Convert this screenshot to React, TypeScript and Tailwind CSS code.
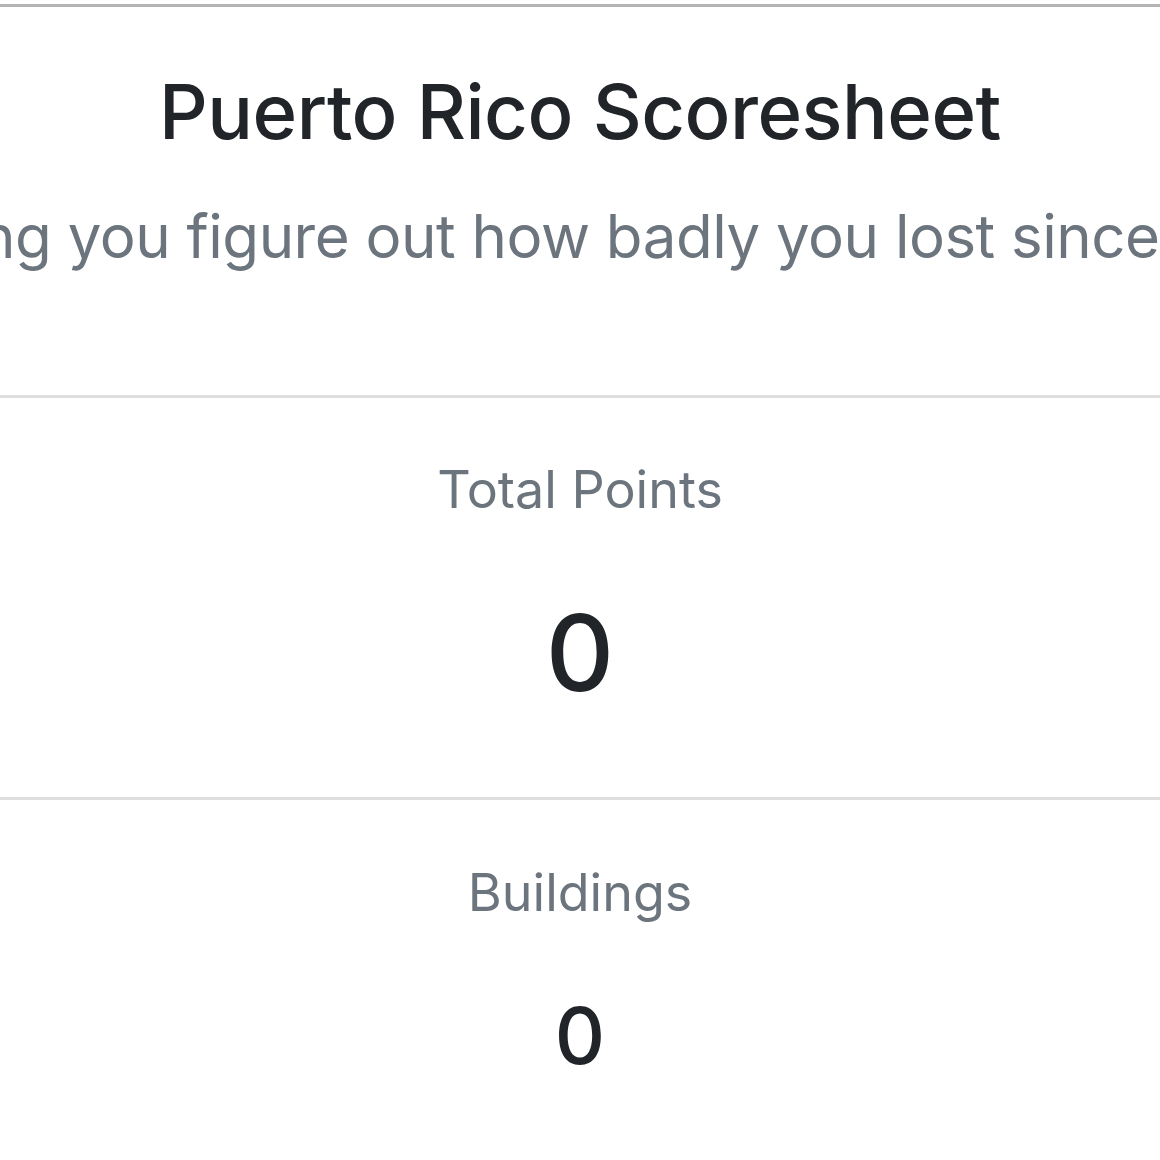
export default function App() {
  return (
    <div
      className="w-[1160px] h-[1160px] overflow-hidden bg-white text-center"
      style={{ fontFamily: 'Inter, "Noto Sans", sans-serif' }}
    >
      {/* Top rule */}
      <div className="mt-[4px] h-[3px] bg-[#b4b4b4]" />

      {/* Header */}
      <header className="flex flex-col items-center pt-[66px] h-[388px]">
        <h1 className="text-[76px] leading-none font-medium text-[#212529] tracking-[-0.5px]">
          Puerto Rico Scoresheet
        </h1>
        <p className="mt-[57px] whitespace-nowrap text-[60px] leading-none text-[#6c757d] tracking-[-0.5px]">
          Helping you figure out how badly you lost since 2002
        </p>
      </header>

      <div className="h-[3px] bg-[#dedede]" />

      {/* Total points */}
      <section className="flex flex-col items-center h-[399px] pt-[66px]">
        <span className="text-[52px] leading-none text-[#6c757d]">Total Points</span>
        <span className="mt-[84px] text-[106px] leading-none font-medium text-[#212529]">0</span>
      </section>

      <div className="h-[3px] bg-[#dedede]" />

      {/* Buildings */}
      <section className="flex flex-col items-center pt-[67px]">
        <span className="text-[52px] leading-none text-[#6c757d]">Buildings</span>
        <span className="mt-[78px] text-[78px] leading-none font-medium text-[#212529]">0</span>
      </section>
    </div>
  );
}
